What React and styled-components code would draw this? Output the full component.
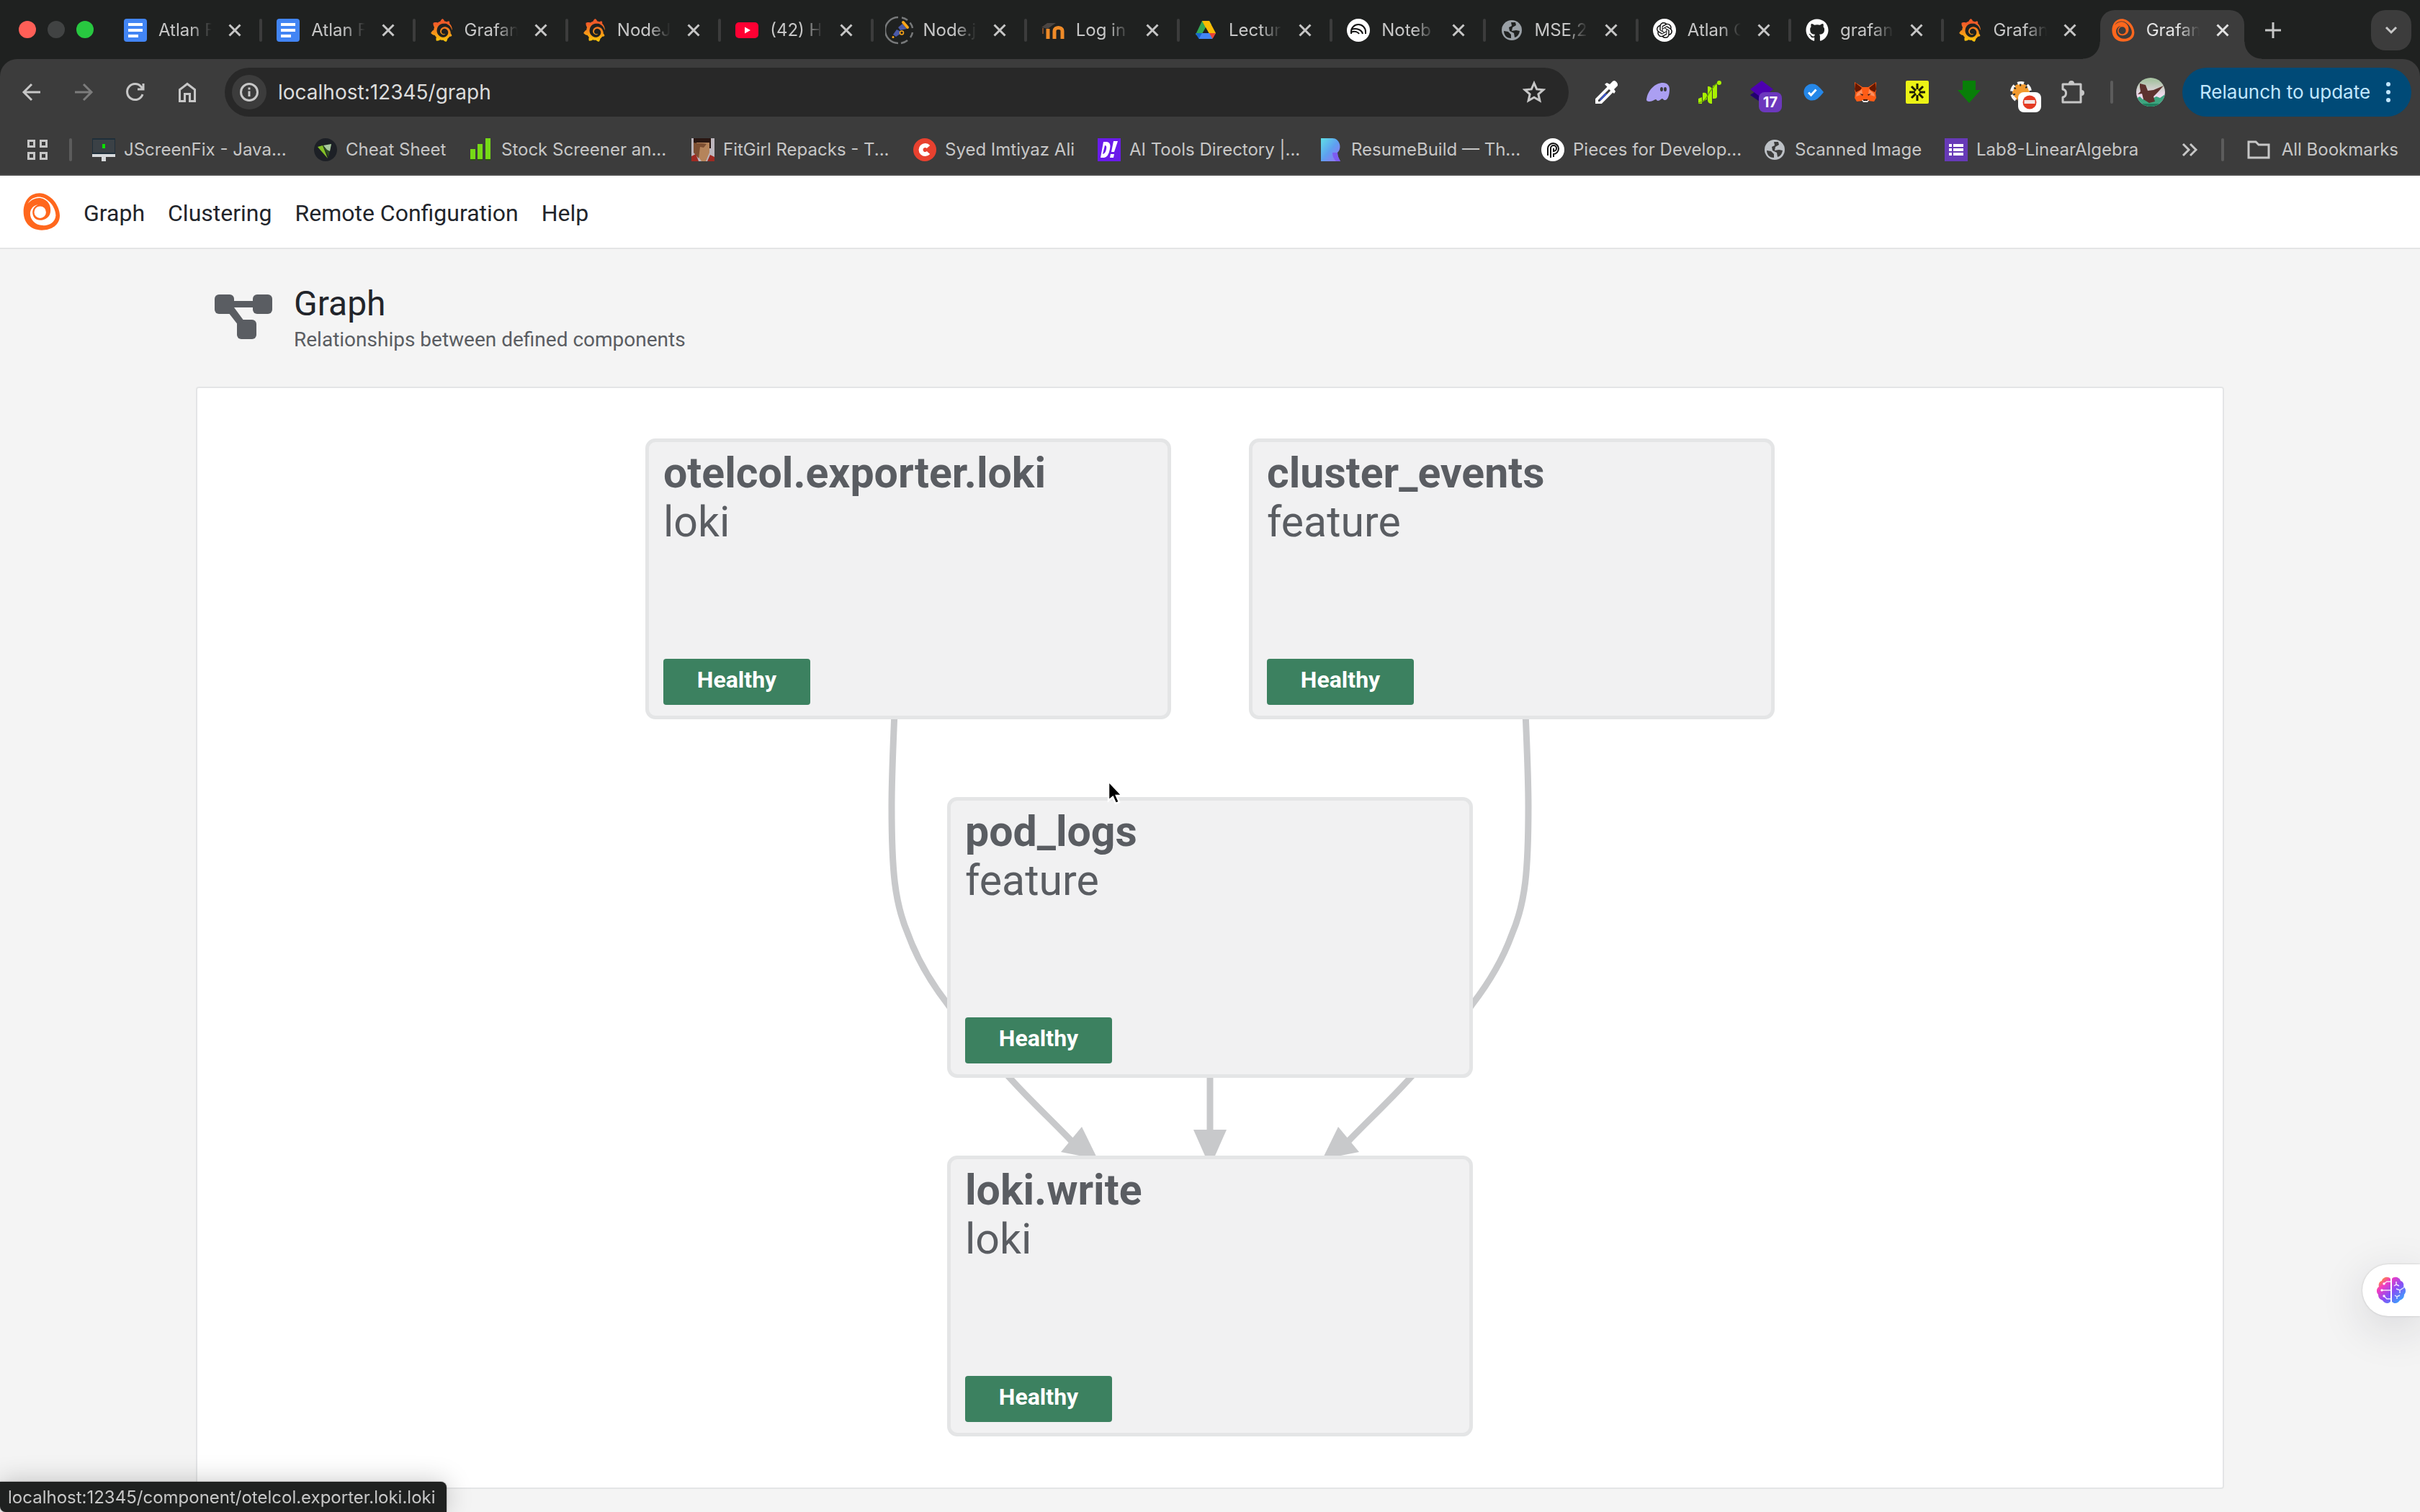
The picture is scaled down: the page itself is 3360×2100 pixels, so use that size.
import React from 'react';
import styled, { createGlobalStyle, css } from 'styled-components';
import { FaGithub } from 'react-icons/fa';
import { SiGrafana, SiOpenai } from 'react-icons/si';

const GlobalStyle = createGlobalStyle`
  * { box-sizing: border-box; }
  html, body, #root { height: 100%; }
  body { margin: 0; background: #f4f4f4; font-family: Roboto, 'Liberation Sans', sans-serif; }
  button { border: 0; padding: 0; background: none; color: inherit; font: inherit; }
  a { color: inherit; text-decoration: none; }
  svg { display: block; flex: none; }
`;

/* ---------- browser chrome ---------- */

const Chrome = styled.div`
  font-family: Inter, 'Noto Sans', sans-serif;
  background: #1f2120;
  color: #c7c7c7;
`;

const TabStrip = styled.div`
  display: flex;
  height: 82px;
  padding: 14px 12px 0 26px;
`;

const WindowDots = styled.div`
  display: flex;
  gap: 16px;
  padding-top: 15px;
  width: 130px;
`;

const WindowDot = styled.button`
  width: 24px;
  height: 24px;
  border-radius: 50%;
  background: ${(p) => p.$color};
`;

const TabList = styled.div`
  flex: 1;
  display: flex;
  gap: 4px;
  min-width: 0;
`;

const flare = css`
  content: '';
  position: absolute;
  bottom: 0;
  width: 24px;
  height: 24px;
`;

const Tab = styled.div`
  flex: 1 1 0;
  min-width: 0;
  position: relative;
  display: flex;
  align-items: center;
  gap: 16px;
  padding: 0 14px 12px 16px;
  border-radius: 20px 20px 0 0;
  ${(p) => p.$active && css`
    background: #3c3c3c;
    color: #e3e3e3;
    &::before { ${flare} right: 100%; background: radial-gradient(circle at 0 0, transparent 23px, #3c3c3c 24px); }
    &::after { ${flare} left: 100%; background: radial-gradient(circle at 100% 0, transparent 23px, #3c3c3c 24px); }
  `}
`;

const TabIcon = styled.span`
  flex: none;
  width: 32px;
  height: 32px;
  display: flex;
  align-items: center;
  justify-content: center;
`;

const TabTitle = styled.span`
  flex: 1;
  min-width: 0;
  overflow: hidden;
  white-space: nowrap;
  font-size: 24px;
  line-height: 32px;
  mask-image: linear-gradient(90deg, #000 60%, transparent);
`;

const TabClose = styled.button`
  flex: none;
  width: 32px;
  height: 32px;
  display: grid;
  place-items: center;
`;

const TabDivider = styled.span`
  flex: none;
  width: 4px;
  height: 32px;
  margin-top: 12px;
  border-radius: 2px;
  background: ${(p) => (p.$hidden ? 'transparent' : '#3c3c3c')};
`;

const StripButton = styled.button`
  width: 56px;
  height: 56px;
  border-radius: 20px;
  display: grid;
  place-items: center;
  background: ${(p) => (p.$filled ? '#3c3c3c' : 'transparent')};
`;

const StripEnd = styled.div`
  display: flex;
  justify-content: space-between;
  width: 232px;
  padding-left: 12px;
`;

const ToolbarShell = styled.div`
  background: #3c3c3c;
  border-radius: 24px 24px 0 0;
  border-bottom: 2px solid #4a4a4a;
`;

const Toolbar = styled.div`
  display: flex;
  align-items: center;
  height: 92px;
  padding: 0 12px 0 20px;
`;

const IconRow = styled.div`
  display: flex;
  gap: 24px;
`;

const ToolButton = styled.button`
  position: relative;
  width: 48px;
  height: 48px;
  display: grid;
  place-items: center;
  color: ${(p) => (p.$dim ? '#7c7c7c' : '#c7c7c7')};
`;

const CountBadge = styled.span`
  position: absolute;
  left: 20px;
  top: 24px;
  width: 32px;
  height: 28px;
  border-radius: 8px;
  display: grid;
  place-items: center;
  background: ${(p) => p.$color};
  color: #fff;
  font-size: 20px;
  line-height: 28px;
  font-weight: 700;
`;

const Omnibox = styled.label`
  flex: 1;
  min-width: 0;
  display: flex;
  align-items: center;
  height: 68px;
  margin: 0 28px;
  padding: 0 24px 0 10px;
  border-radius: 34px;
  background: #282828;
`;

const SiteInfo = styled.span`
  width: 48px;
  height: 48px;
  border-radius: 50%;
  display: grid;
  place-items: center;
  background: #3c3c3c;
`;

const UrlInput = styled.input`
  flex: 1;
  min-width: 0;
  border: 0;
  outline: 0;
  padding: 0 16px;
  background: transparent;
  color: #dcdcdc;
  font: 28px/36px Inter, 'Noto Sans', sans-serif;
`;

const Divider = styled.span`
  flex: none;
  width: 4px;
  height: 32px;
  border-radius: 2px;
  background: #5c5c5c;
  margin: 0 ${(p) => p.$after}px 0 ${(p) => p.$before}px;
`;

const Relaunch = styled.button`
  display: flex;
  align-items: center;
  justify-content: space-between;
  width: 318px;
  height: 68px;
  margin-left: 24px;
  padding: 0 28px 0 24px;
  border-radius: 34px;
  background: #004a77;
  color: #c2e7ff;
  font-size: 26px;
  line-height: 36px;
  white-space: nowrap;
`;

const BookmarkBar = styled.nav`
  display: flex;
  align-items: center;
  height: 68px;
  padding: 0 30px 0 38px;
  font-size: 24px;
  line-height: 32px;
  white-space: nowrap;
`;

const BookmarkList = styled.div`
  flex: 1;
  min-width: 0;
  display: flex;
`;

const Bookmark = styled.a`
  flex: none;
  display: flex;
  align-items: center;
  gap: 12px;
  width: ${(p) => (p.$width ? `${p.$width}px` : 'auto')};
`;

const AllBookmarks = styled.a`
  display: flex;
  align-items: center;
  gap: 16px;
`;

/* ---------- application ---------- */

const Frame = styled.div`
  min-height: 100%;
  display: flex;
  flex-direction: column;
`;

const AppHeader = styled.header`
  display: flex;
  align-items: center;
  gap: 32px;
  height: 102px;
  padding: 0 32px;
  background: #fff;
  border-bottom: 2px solid #e4e5e6;
`;

const AppNav = styled.nav`
  display: flex;
  gap: 32px;
  padding-top: 4px;
  color: #22252b;
  font-size: 32px;
  line-height: 40px;
`;

const Page = styled.main`
  flex: 1;
  padding: 46px 272px 32px;
`;

const PageHead = styled.div`
  display: flex;
  align-items: center;
  gap: 30px;
  padding: 0 26px;
  margin-bottom: 45px;
  color: #5a5d62;
`;

const PageTitle = styled.h1`
  margin: 0;
  color: #22252b;
  font-size: 48px;
  line-height: 60px;
  font-weight: 400;
`;

const PageSubtitle = styled.p`
  margin: 0;
  font-size: 28px;
  line-height: 40px;
`;

const Card = styled.section`
  padding: 70px 32px;
  border: 2px solid #e4e5e6;
  border-radius: 4px;
  background: #fff;
`;

const Canvas = styled.div`
  position: relative;
  width: 1568px;
  height: 1387px;
  margin: 0 auto;
`;

const Edges = styled.svg`
  position: absolute;
  inset: 0;
  width: 100%;
  height: 100%;
`;

const Node = styled.a`
  position: absolute;
  left: ${(p) => p.$x}px;
  top: ${(p) => p.$y}px;
  width: 730px;
  height: 390px;
  display: flex;
  flex-direction: column;
  align-items: flex-start;
  padding: 9px 20px 15px;
  border: 5px solid #e4e5e6;
  border-radius: 14px;
  background: #f1f1f2;
  color: #5a5d62;
  font-size: 59px;
  line-height: 68px;
`;

const NodeName = styled.strong`
  font-weight: 700;
`;

const Health = styled.span`
  width: 204px;
  height: 64px;
  margin-top: auto;
  padding-bottom: 6px;
  display: grid;
  place-items: center;
  border-radius: 4px;
  background: #3c8160;
  color: #fff;
  font-size: 32px;
  line-height: 40px;
  font-weight: 700;
`;

const Pointer = styled.svg`
  position: absolute;
  left: 634px;
  top: 470px;
`;

const Assistant = styled.button`
  position: fixed;
  right: 0;
  top: 1756px;
  width: 80px;
  height: 72px;
  padding-left: 20px;
  border-radius: 36px 0 0 36px;
  background: #fff;
  box-shadow: 0 0 3px rgba(0, 0, 0, 0.18), 0 16px 64px rgba(30, 30, 50, 0.14);
`;

const StatusBubble = styled.div`
  position: fixed;
  left: 0;
  bottom: 0;
  padding: 2px 15px 0 11px;
  border-radius: 0 8px 0 8px;
  background: #1f2120;
  color: #c7c7c7;
  font: 24px/40px Inter, 'Noto Sans', sans-serif;
  box-shadow: 0 0 2px rgba(0, 0, 0, 0.5), 0 0 36px rgba(0, 0, 0, 0.22);
`;

/* ---------- drawings ---------- */

const Line = ({ size = 32, width = 3, d, children }) => (
  <svg width={size} height={size} viewBox="0 0 32 32" fill="none" stroke="currentColor" strokeWidth={width}>
    {d && <path d={d} />}
    {children}
  </svg>
);

const Pic = ({ size = 32, children }) => (
  <svg width={size} height={size} viewBox="0 0 32 32">{children}</svg>
);

const AlloyLogo = ({ size }) => (
  <svg width={size} height={size} viewBox="35 35 156 158">
    <path
      fill="#ff671d"
      fillRule="evenodd"
      d="M103 36C150 36 189 88 189 130C189 170 155 192 113 192C65 192 36 160 36 115C36 70 62 36 103 36Z
        M54 80C66 58 86 51 106 52C140 56 172 95 172 130C170 160 142 174 116 172C84 170 63 146 64 119C66 99 80 86 97 84C82 92 74 102 74 118C75 138 88 150 105 150C128 150 149 136 150 110C151 88 142 72 124 62C100 50 74 58 54 80Z
        M81 116a25 25 0 1 0 50 0a25 25 0 1 0 -50 0Z"
    />
  </svg>
);

const DiagramIcon = () => (
  <svg width="80" height="68" viewBox="0 0 80 68" fill="currentColor">
    <rect x="0" y="1" width="27" height="27" rx="6" />
    <rect x="53" y="1" width="27" height="27" rx="6" />
    <rect x="31" y="36" width="27" height="27" rx="6" />
    <path d="M24 10h32v9H24z" />
    <path d="M19 26l8-7 14 19-8 6z" />
  </svg>
);

const DocsIcon = () => (
  <Pic>
    <rect width="32" height="32" rx="4" fill="#4285f4" />
    <path d="M6 8h20M6 16h20M6 24h14" stroke="#fff" strokeWidth="4" />
  </Pic>
);

const GrafanaIcon = () => (
  <svg width="32" height="32" viewBox="0 0 24 24">
    <defs>
      <linearGradient id="grafanaFill" gradientUnits="userSpaceOnUse" x1="0" y1="0" x2="0" y2="24">
        <stop offset="0.2" stopColor="#f05a28" />
        <stop offset="1" stopColor="#fbca0a" />
      </linearGradient>
    </defs>
    <SiGrafana size={24} fill="url(#grafanaFill)" />
  </svg>
);

const YoutubeIcon = () => (
  <Pic>
    <rect y="5" width="32" height="22" rx="5" fill="#ff0033" />
    <path d="M13 11.5l8 4.500-8 4.500z" fill="#fff" />
  </Pic>
);

const TelescopeIcon = () => (
  <svg width="40" height="40" viewBox="0 0 40 40" fill="none">
    <path d="M18 2A18 18 0 0 0 18 38M23 2.500A18 18 0 0 1 31 6M34.500 9.500A18 18 0 0 1 38 17M38 23A18 18 0 0 1 35 30M31 34A18 18 0 0 1 22 38" stroke="#77797a" strokeWidth="2.500" />
    <path d="M18 16l6-5 6 7-9 2zM11 26l5-7 4 2 1 4-6 4z" fill="#4a5aa8" />
    <path d="M25 9l6 7" stroke="#faa61a" strokeWidth="4" strokeLinecap="round" />
    <circle cx="23" cy="23.500" r="2.500" stroke="#faa61a" strokeWidth="1.500" />
    <circle cx="11" cy="29.500" r="1.500" fill="#faa61a" />
  </svg>
);

const MoodleIcon = () => (
  <Pic>
    <path d="M9 28V14M18 28V17c0-6 11-6 11 0v11" fill="none" stroke="#ef8b28" strokeWidth="5" />
    <path d="M0 12l8-6h12l-6 4-5 4z" fill="#4b4542" />
    <path d="M2 13v8" stroke="#7c4a2a" strokeWidth="2" />
  </Pic>
);

const DriveIcon = () => (
  <Pic>
    <path d="M11 3h10l3 5L9 27 2 22z" fill="#34a853" />
    <path d="M11 3h10l9 17H20z" fill="#fbbc04" />
    <path d="M2 20h28l-5 8H7z" fill="#4285f4" />
    <path d="M21 20h9l-4.500 8z" fill="#ea4335" />
    <path d="M2 20h9l-4.500 8z" fill="#1967d2" />
    <path d="M16 12l4.500 8h-9z" fill="#1f2120" />
  </Pic>
);

const NotebookIcon = () => (
  <Pic>
    <circle cx="16" cy="16" r="16" fill="#fff" />
    <g fill="none" stroke="#111" strokeWidth="2">
      <path d="M6 21v-3a10 10 0 0 1 20 0v3" />
      <path d="M6 15c8-3 15 1 16 6M6 19c5-3 10 0 11 2" />
    </g>
  </Pic>
);

const GlobeIcon = ({ color = '#9aa0a6', hole = '#1f2120' }) => (
  <Pic>
    <circle cx="16" cy="16" r="14" fill={color} />
    <path d="M5 17l6 1 4 4v5C8 27 5 22 5 17zM15 5h6l1 4-5 3-1 5 6-1 5 1c-1 5-3 8-7 9l-1-6-6-3-1-5 4-2z" fill={hole} />
  </Pic>
);

const OpenAiIcon = () => (
  <Pic>
    <circle cx="16" cy="16" r="16" fill="#fff" />
    <SiOpenai x="5" y="5" size={22} color="#111" />
  </Pic>
);

const CloseIcon = () => <Line size={32} width={3} d="M8.500 8.500l15 15M23.500 8.500l-15 15" />;
const BackIcon = () => <Line d="M28 16H6M16 5L5 16l11 11" />;
const ForwardIcon = () => <Line d="M4 16h22M16 5l11 11-11 11" />;
const ReloadIcon = () => <Line d="M26 19A11 11 0 1 1 24 8.500l3 3M27 4v8h-8" />;
const HomeIcon = () => <Line d="M5.500 28.500V12.500L16 4.500l10.500 8v16h-7V18.500h-7v10z" />;

const DropperIcon = () => (
  <Pic>
    <path d="M20 9L3 26v5h5l17-17z" fill="#3c3c3c" stroke="#fff" strokeWidth="4" />
    <path d="M14 18l-7 8 1 2 10-10z" fill="#3b55c8" />
    <path d="M14 5l13 13 2-3-2-3 5-5q1-4-4-7-3 0-4 2l-3 3-4-2z" fill="#fff" />
  </Pic>
);

const GhostIcon = () => (
  <Pic>
    <path d="M0 26C2 13 12 3 23 3c6 0 9 4 9 9 0 9-3 15-6 15-3 0-3-2-4-2-2 0-3 3-6 3-2 0-2-2-3-2-2 0-4 3-9 3-3 0-4-1-4-3z" fill="#ab9ff2" />
    <ellipse cx="21" cy="12" rx="2" ry="3" fill="#3c3c3c" />
    <ellipse cx="26" cy="12" rx="2" ry="3" fill="#3c3c3c" />
  </Pic>
);

const GrowthIcon = () => (
  <Pic>
    <path d="M0 25l5-2v9H0zM6 17c3-1 6 0 6 3v6l-6 3zM13 8c4 0 6 2 6 5v19c-4 0-6-2-6-5zM20 7c3-1 6-2 6-2v17c0 3-3 3-6 3z" fill="#a8f000" />
    <path d="M0 31C12 29 12 20 17 14S23 4 29 3" fill="none" stroke="#6aa300" strokeWidth="1.500" />
    <circle cx="29" cy="3" r="3" fill="#a8f000" />
  </Pic>
);

const LayersIcon = () => (
  <Pic>
    <path d="M0 20l16-11 16 11-16 11z" fill="#22006e" />
    <path d="M0 12L16 0l16 12-16 12z" fill="#4d00b0" />
  </Pic>
);

const VerifiedIcon = () => (
  <Pic>
    <path d="M14 4.500c6 0 9 3 16 11.500-7 8.500-10 11.500-16 11.500a11.500 11.500 0 0 1 0-23z" fill="#2587e8" />
    <path d="M9 16.500l3.500 3.500 7-7.500" fill="none" stroke="#fff" strokeWidth="3" />
  </Pic>
);

const FoxIcon = () => (
  <Pic>
    <path d="M1 2l11 7h8l11-7 0 11-1 4 1 7-3 5-8-1-2 2h-4l-2-2-8 1-3-5 1-7-1-4z" fill="#ff5c16" />
    <path d="M2 3l9 7-2 3-6 3-2-4zM30 3l-9 7 2 3 6 3 2-4z" fill="#661800" />
    <path d="M4 18l7-6 1 7-9 3zM28 18l-7-6-1 7 9 3z" fill="#ff8d5d" />
    <path d="M11 27h10l-2 3h-6z" fill="#f1ece8" />
    <path d="M8 18l5 1-1 2zM24 18l-5 1 1 2zM13 26h6v2h-6z" fill="#3b1a10" />
  </Pic>
);

const BurstIcon = () => (
  <Pic>
    <rect width="32" height="32" rx="2" fill="#ecf315" />
    <path d="M16 4v8M16 20v8M5 16h8M19 16h8M8 8l6 6M18 18l6 6M24 8l-6 6M14 18l-6 6" stroke="#1b1d05" strokeWidth="3" />
  </Pic>
);

const DownloadIcon = () => (
  <Pic><path d="M7 0h18v13h7L16 31 0 13h7z" fill="#087f08" /></Pic>
);

const TigerIcon = () => (
  <>
    <Pic>
      <circle cx="16" cy="16" r="12" fill="#f29a2e" />
      <circle cx="16" cy="16" r="13" fill="none" stroke="#f4f4f4" strokeWidth="4" strokeDasharray="9 5" />
      <circle cx="16" cy="16" r="10" fill="none" stroke="#2b2b2b" strokeWidth="3" strokeDasharray="2 7" />
    </Pic>
    <CountBadge $color="#fff">
      <svg width="20" height="20" viewBox="0 0 20 20">
        <circle cx="10" cy="10" r="9.500" fill="#e43a22" />
        <rect x="2.500" y="7" width="15" height="5" fill="#f3e6e4" />
      </svg>
    </CountBadge>
  </>
);

const PuzzleIcon = () => (
  <svg width="34" height="34" viewBox="0 0 34 34" fill="none" stroke="currentColor" strokeWidth="3">
    <path d="M3 6h25v25H3v-7c6-1 6-10 0-11z" strokeLinejoin="round" />
    <path d="M11 5a4 4 0 0 1 8 0zM29 14a4 4 0 0 1 0 8z" fill="currentColor" stroke="none" />
  </svg>
);

const AvatarIcon = () => (
  <svg width="40" height="40" viewBox="0 0 40 40">
    <defs>
      <clipPath id="avatarClip"><circle cx="20" cy="20" r="20" /></clipPath>
      <linearGradient id="avatarSky" x1="0" y1="0" x2="0" y2="1">
        <stop offset="0.1" stopColor="#a9c3a4" />
        <stop offset="0.6" stopColor="#efd9ec" />
      </linearGradient>
    </defs>
    <g clipPath="url(#avatarClip)">
      <rect width="40" height="40" fill="url(#avatarSky)" />
      <path d="M0 29l5-3 4 4 6-3 5 3 8-4 5 2 7-5v17H0z" fill="#3da57f" />
      <path d="M4 36h36v4H4z" fill="#1f7d5c" />
      <path d="M5 8l8 2 3 8 8-1 14-6-8 9-6 6 2 7-8 2-8-5-2-8-6 1 4-4-1-6z" fill="#5d322e" />
    </g>
  </svg>
);

const AppsIcon = () => (
  <svg width="28" height="28" viewBox="0 0 28 28" fill="none" stroke="currentColor" strokeWidth="3">
    <path d="M1.500 1.500h8v8h-8zM18.500 1.500h8v8h-8zM1.500 18.500h8v8h-8zM18.500 18.500h8v8h-8z" />
  </svg>
);

const MonitorIcon = () => (
  <Pic>
    <rect width="32" height="24" fill="#1f2f3a" />
    <rect x="1" y="2" width="30" height="18" fill="#3b4146" />
    <path d="M0 22h32v4H19v6h-6v-6H0z" fill="#d7dadc" />
    <rect x="14" y="8" width="4" height="6" fill="#0be000" />
  </Pic>
);

const CheatIcon = () => (
  <Pic>
    <circle cx="16" cy="16" r="16" fill="#1d2026" />
    <path d="M5 12l7-2 7 18z" fill="#84c226" />
    <path d="M12 10l12-2-4 18z" fill="#2c4a22" />
    <path d="M13 10l11-2-2 10-4-2z" fill="#a9c9a0" />
  </Pic>
);

const BarsIcon = () => (
  <Pic>
    <path d="M1 15h7v14H1zM11 8h7v21h-7zM22 0h7v29h-7z" fill="#76d916" />
    <path d="M1 29h7v2H1zM11 29h7v2h-7zM22 29h7v2h-7z" fill="#2c4f15" />
  </Pic>
);

const PortraitIcon = () => (
  <Pic>
    <rect width="32" height="32" fill="#bcb6bd" />
    <path d="M3 0h24v14H3z" fill="#2a1712" />
    <path d="M7 6h18v14l-5 12h-6L7 22z" fill="#b5845b" />
    <path d="M3 6c8 2 12 0 18 2l-4 5-5-1-2 16-7-8z" fill="#7d4f32" />
    <path d="M0 32v-7l6-3 4 10zM32 32v-6l-6-3-4 9z" fill="#9d2a22" />
  </Pic>
);

const SyedIcon = () => (
  <Pic>
    <circle cx="16" cy="16" r="16" fill="#e8412f" />
    <path d="M21 12a6 6 0 1 0 0 8" fill="none" stroke="#fff" strokeWidth="6" />
  </Pic>
);

const DirectoryIcon = () => (
  <Pic>
    <rect width="32" height="32" fill="#6a1bea" />
    <path d="M8 5h5q6 1 4 10-2 11-8 12H4z M10 10l-3 12q4-1 5-7 1-5-2-5z" fill="#fff" fillRule="evenodd" />
    <path d="M22 4h6l-5 15h-4zM18 22h5l-1 5h-5z" fill="#fff" />
  </Pic>
);

const ResumeIcon = () => (
  <Pic>
    <defs>
      <linearGradient id="resumeFill" x1="0" y1="0" x2="1" y2="1">
        <stop offset="0" stopColor="#5fe0e6" />
        <stop offset="0.5" stopColor="#5ea0f0" />
        <stop offset="1" stopColor="#a06bf5" />
      </linearGradient>
    </defs>
    <path d="M2 0h16c10 0 14 14 7 20 0 5 2 8 4 12H2z" fill="url(#resumeFill)" />
    <path d="M18 20h7c0 5 2 8 4 12h-6c-3-3-5-7-5-12z" fill="#7d5cf0" />
  </Pic>
);

const PiecesIcon = () => (
  <Pic>
    <circle cx="16" cy="16" r="16" fill="#fff" />
    <path d="M9 24V14a7.500 7.500 0 1 1 8 8v4M13 27V14a4 4 0 1 1 4 4v-4" fill="none" stroke="#111" strokeWidth="2" />
  </Pic>
);

const FormsIcon = () => (
  <Pic>
    <rect width="32" height="32" fill="#673ab7" />
    <path d="M6 10h4M12 10h14M6 16h4M12 16h14M6 22h4M12 22h14" stroke="#fff" strokeWidth="4" />
  </Pic>
);

const BrainIcon = () => (
  <svg width="40" height="38" viewBox="0 0 40 38">
    <defs>
      <linearGradient id="brainFill" x1="0" y1="0" x2="1" y2="1">
        <stop offset="0.05" stopColor="#ffb000" />
        <stop offset="0.27" stopColor="#f53cc0" />
        <stop offset="0.55" stopColor="#8a4df5" />
        <stop offset="0.95" stopColor="#28b4ff" />
      </linearGradient>
    </defs>
    <path d="M19 3C16-1 8 1 7 6 3 7 2 11 3 14c-4 3-4 8-1 11 0 5 3 7 6 8 3 5 8 5 11 2zM21 3c3-4 11-2 12 3 4 1 5 5 4 8 4 3 4 8 1 11 0 5-3 7-6 8-3 5-8 5-11 2z" fill="url(#brainFill)" />
    <g fill="none" stroke="#fff" strokeOpacity="0.85" strokeWidth="1.500">
      <path d="M10 10l4-3h5M7 19h12M10 27l4 4h5M27 7v4l-3 2M27 11l4 2M27 17l5 2 6-4M32 19v4M25 26l3 2 4-2M28 28v3" />
      <circle cx="10" cy="10" r="1" fill="#fff" />
      <circle cx="7" cy="19" r="1" fill="#fff" />
      <circle cx="10" cy="27" r="1" fill="#fff" />
    </g>
  </svg>
);

/* ---------- data ---------- */

const tabs = [
  { title: 'Atlan F', icon: <DocsIcon /> },
  { title: 'Atlan F', icon: <DocsIcon /> },
  { title: 'Grafan', icon: <GrafanaIcon /> },
  { title: 'NodeJ', icon: <GrafanaIcon /> },
  { title: '(42) H', icon: <YoutubeIcon /> },
  { title: 'Node.j', icon: <TelescopeIcon /> },
  { title: 'Log in', icon: <MoodleIcon /> },
  { title: 'Lectur', icon: <DriveIcon /> },
  { title: 'Noteb', icon: <NotebookIcon /> },
  { title: 'MSE,2', icon: <GlobeIcon /> },
  { title: 'Atlan C', icon: <OpenAiIcon /> },
  { title: 'grafan', icon: <FaGithub size={32} color="#fff" /> },
  { title: 'Grafan', icon: <GrafanaIcon /> },
  { title: 'Grafan', icon: <AlloyLogo size={32} />, active: true },
];

const extensions = [
  { name: 'Color picker', icon: <DropperIcon /> },
  { name: 'Ghost wallet', icon: <GhostIcon /> },
  { name: 'Growth', icon: <GrowthIcon /> },
  { name: 'Layers', icon: <><LayersIcon /><CountBadge $color="#6c38bd">17</CountBadge></> },
  { name: 'Verified', icon: <VerifiedIcon /> },
  { name: 'Fox wallet', icon: <FoxIcon /> },
  { name: 'Burst', icon: <BurstIcon /> },
  { name: 'Downloader', icon: <DownloadIcon /> },
  { name: 'Tiger', icon: <TigerIcon /> },
  { name: 'Extensions', icon: <PuzzleIcon /> },
];

const bookmarks = [
  { label: 'JScreenFix - Java...', icon: <MonitorIcon />, width: 308 },
  { label: 'Cheat Sheet', icon: <CheatIcon />, width: 216 },
  { label: 'Stock Screener an...', icon: <BarsIcon />, width: 308 },
  { label: 'FitGirl Repacks - T...', icon: <PortraitIcon />, width: 308 },
  { label: 'Syed Imtiyaz Ali', icon: <SyedIcon />, width: 256 },
  { label: 'AI Tools Directory |...', icon: <DirectoryIcon />, width: 308 },
  { label: 'ResumeBuild — Th...', icon: <ResumeIcon />, width: 308 },
  { label: 'Pieces for Develop...', icon: <PiecesIcon />, width: 308 },
  { label: 'Scanned Image', icon: <GlobeIcon color="#bdc1c6" hole="#3c3c3c" />, width: 252 },
  { label: 'Lab8-LinearAlgebra', icon: <FormsIcon /> },
];

const nodes = [
  { name: 'otelcol.exporter.loki', label: 'loki', x: 0, y: 0 },
  { name: 'cluster_events', label: 'feature', x: 838, y: 0 },
  { name: 'pod_logs', label: 'feature', x: 419, y: 498 },
  { name: 'loki.write', label: 'loki', x: 419, y: 996 },
];

const SIDE_EDGE = 'M346 380C344 430 342 470 342 511C342 600 346 645 365 689C377 722 396 755 420 786C446 822 480 860 506 888C530 915 560 943 591 975';
const SIDE_HEAD = 'M606 956L577 991L628 1001Z';

export default function App() {
  return (
    <Frame>
      <GlobalStyle />
      <Chrome>
        <TabStrip>
          <WindowDots>
            <WindowDot $color="#ff5f57" aria-label="Close window" />
            <WindowDot $color="#414343" aria-label="Minimise window" />
            <WindowDot $color="#28c840" aria-label="Zoom window" />
          </WindowDots>
          <TabList>
            {tabs.map((tab, i) => (
              <React.Fragment key={i}>
                <Tab $active={tab.active}>
                  <TabIcon>{tab.icon}</TabIcon>
                  <TabTitle>{tab.title}</TabTitle>
                  <TabClose aria-label="Close tab"><CloseIcon /></TabClose>
                </Tab>
                {i < tabs.length - 1 && <TabDivider $hidden={i === tabs.length - 2} />}
              </React.Fragment>
            ))}
          </TabList>
          <StripEnd>
            <StripButton aria-label="New tab"><Line size={32} d="M16 5v22M5 16h22" /></StripButton>
            <StripButton $filled aria-label="Search tabs"><Line size={32} d="M9 12l7 7 7-7" /></StripButton>
          </StripEnd>
        </TabStrip>

        <ToolbarShell>
          <Toolbar>
            <IconRow>
              <ToolButton aria-label="Back"><BackIcon /></ToolButton>
              <ToolButton $dim aria-label="Forward"><ForwardIcon /></ToolButton>
              <ToolButton aria-label="Reload"><ReloadIcon /></ToolButton>
              <ToolButton aria-label="Home"><HomeIcon /></ToolButton>
            </IconRow>
            <Omnibox>
              <SiteInfo>
                <Line width={3}>
                  <circle cx="16" cy="16" r="11.5" />
                  <path d="M16 14.500v7.500M16 9.500v3" />
                </Line>
              </SiteInfo>
              <UrlInput aria-label="Address" defaultValue="localhost:12345/graph" />
              <ToolButton as="span">
                <Line d="M16 3.500l3.700 8.400 9 .9-6.800 6 2 9L16 23.200 8.100 27.800l2-9-6.800-6 9-.9z" />
              </ToolButton>
            </Omnibox>
            <IconRow>
              {extensions.map((ext) => (
                <ToolButton key={ext.name} aria-label={ext.name}>{ext.icon}</ToolButton>
              ))}
            </IconRow>
            <Divider $before={28} $after={32} />
            <AvatarIcon />
            <Relaunch>
              Relaunch to update
              <svg width="8" height="28" viewBox="0 0 8 28" fill="currentColor">
                <circle cx="4" cy="3" r="3" /><circle cx="4" cy="14" r="3" /><circle cx="4" cy="25" r="3" />
              </svg>
            </Relaunch>
          </Toolbar>

          <BookmarkBar>
            <AppsIcon />
            <Divider $before={30} $after={28} />
            <BookmarkList>
              {bookmarks.map((b) => (
                <Bookmark key={b.label} href="#" $width={b.width}>{b.icon}{b.label}</Bookmark>
              ))}
            </BookmarkList>
            <Line size={32} d="M7 8l8 8-8 8M17 8l8 8-8 8" />
            <Divider $before={28} $after={32} />
            <AllBookmarks href="#">
              <Line size={32} d="M2 27V5h10l4 4h14v18z" />
              All Bookmarks
            </AllBookmarks>
          </BookmarkBar>
        </ToolbarShell>
      </Chrome>

      <AppHeader>
        <AlloyLogo size={52} />
        <AppNav>
          <a href="#graph">Graph</a>
          <a href="#clustering">Clustering</a>
          <a href="#remote">Remote Configuration</a>
          <a href="#help">Help</a>
        </AppNav>
      </AppHeader>

      <Page>
        <PageHead>
          <DiagramIcon />
          <div>
            <PageTitle>Graph</PageTitle>
            <PageSubtitle>Relationships between defined components</PageSubtitle>
          </div>
        </PageHead>
        <Card>
          <Canvas>
            <Edges viewBox="0 0 1568 1387" fill="none" stroke="#c8c9cb" strokeWidth="9">
              <path d={SIDE_EDGE} />
              <path d={SIDE_HEAD} fill="#c8c9cb" stroke="none" />
              <g transform="translate(1568 0) scale(-1 1)">
                <path d={SIDE_EDGE} />
                <path d={SIDE_HEAD} fill="#c8c9cb" stroke="none" />
              </g>
              <path d="M784 880V965" />
              <path d="M761 960H807L784 1012Z" fill="#c8c9cb" stroke="none" />
            </Edges>
            {nodes.map((n) => (
              <Node key={n.name} href="#" $x={n.x} $y={n.y}>
                <NodeName>{n.name}</NodeName>
                <span>{n.label}</span>
                <Health>Healthy</Health>
              </Node>
            ))}
            <Pointer width="36" height="48" viewBox="0 0 36 48">
              <path d="M9 6V33L15 28L19 37L24 35L20 26H28Z" fill="#000" stroke="#fff" strokeWidth="2.500" />
            </Pointer>
          </Canvas>
        </Card>
      </Page>

      <Assistant aria-label="Open assistant"><BrainIcon /></Assistant>
      <StatusBubble>localhost:12345/component/otelcol.exporter.loki.loki</StatusBubble>
    </Frame>
  );
}
